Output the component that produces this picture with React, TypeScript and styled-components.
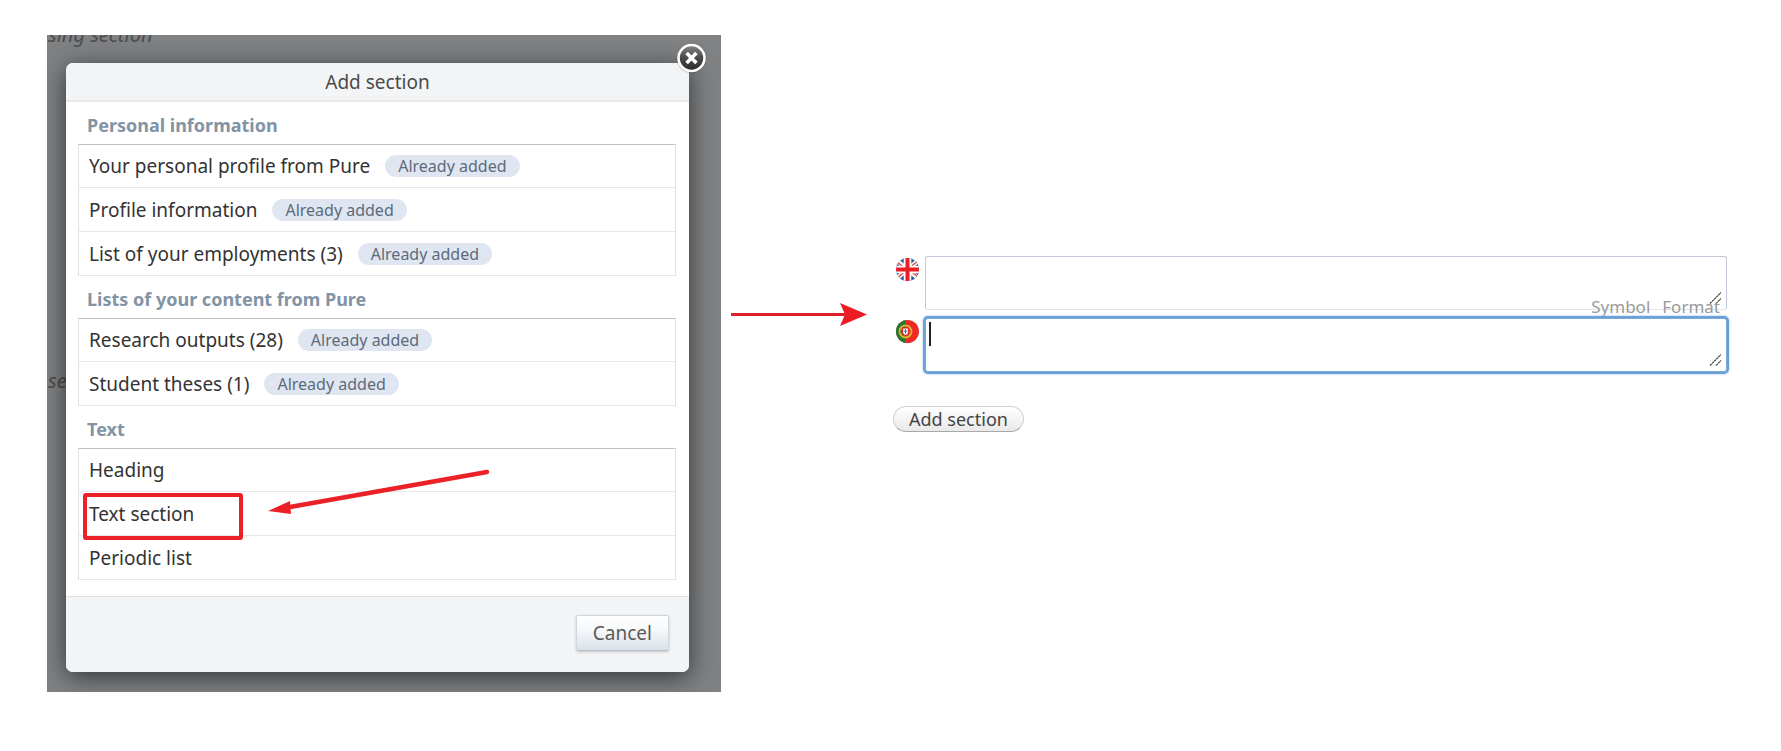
import React from 'react';
import styled, { createGlobalStyle, css } from 'styled-components';

const GlobalStyle = createGlobalStyle`
  *, *::before, *::after { box-sizing: border-box; }
  body {
    margin: 0;
    background: #fff;
    color: #333;
    font: 400 19px/24px "Noto Sans", "Open Sans", sans-serif;
  }
  button, textarea { font: inherit; color: inherit; }
`;

const Page = styled.main`
  display: grid;
  grid-template-columns: 674fr 172fr 834fr;
  align-items: start;
  padding: 35px 54px 58px 47px;
`;

const Backdrop = styled.section`
  position: relative;
  overflow: hidden;
  padding: 28px 32px 20px 19px;
  background: #7f8183;
`;

const BehindText = styled.span<{ $top: number; $left: number }>`
  position: absolute;
  top: ${(p) => p.$top}px;
  left: ${(p) => p.$left}px;
  color: #4c4d4f;
  font-size: 20px;
  font-style: italic;
  white-space: nowrap;
`;

const Dialog = styled.div`
  position: relative;
  border-radius: 7px;
  background: #fff;
  box-shadow: 0 5px 25px rgba(0, 0, 0, 0.6);
`;

const DialogHeader = styled.header`
  padding: 7px 16px 6px;
  border-bottom: 2px solid #e8e9ea;
  border-radius: 7px 7px 0 0;
  background: #f3f4f6;
  text-align: center;
`;

const DialogTitle = styled.h1`
  margin: 0;
  color: #4a4a4a;
  font-size: 19px;
  font-weight: 400;
  line-height: 24px;
`;

const CloseButton = styled.button`
  position: absolute;
  top: -20px;
  right: -18px;
  width: 31px;
  height: 31px;
  padding: 0;
  border: 0;
  background: none;
  svg { display: block; }
`;

const DialogBody = styled.div`
  padding: 0 13px 16px 12px;
`;

const GroupTitle = styled.h2`
  margin: 0;
  padding: 11px 9px 7px;
  color: #8293a5;
  font-size: 18px;
  font-weight: 700;
  line-height: 24px;
`;

const List = styled.ul`
  margin: 0;
  padding: 0;
  border: 1px solid #dfe1e3;
  border-top-color: #bfc1c3;
  border-bottom: 0;
  list-style: none;
`;

const Item = styled.li<{ $marked?: boolean }>`
  position: relative;
  height: 44px;
  border-bottom: 1px solid #e6e8ea;
  &:first-child { height: 43px; }
  ${(p) =>
    p.$marked &&
    css`
      &::after {
        content: "";
        position: absolute;
        top: 1px;
        left: 4px;
        width: 160px;
        height: 47px;
        border: 4px solid #ec2027;
        border-radius: 3px;
        pointer-events: none;
      }
    `}
`;

const ItemButton = styled.button`
  display: flex;
  align-items: center;
  gap: 15px;
  width: 100%;
  height: 100%;
  padding: 0 10px;
  border: 0;
  background: none;
  text-align: left;
`;

const Badge = styled.span`
  padding: 0 13px;
  border-radius: 11px;
  background: #dfe6f1;
  color: #5d6b79;
  font-size: 16px;
  line-height: 22px;
`;

const PointerArrow = styled.svg`
  position: absolute;
  top: -24px;
  left: 187px;
  z-index: 1;
  pointer-events: none;
`;

const DialogFooter = styled.footer`
  display: flex;
  justify-content: flex-end;
  padding: 18px 20px 21px;
  border-top: 1px solid #dfe1e3;
  border-radius: 0 0 7px 7px;
  background: #f3f4f6;
`;

const CancelButton = styled.button`
  height: 36px;
  padding: 0 16px;
  border: 1px solid #cfd6de;
  border-bottom-color: #b4c0cc;
  border-radius: 2px;
  background: linear-gradient(#fff, #f6f8fa 40%, #dbe1e9);
  box-shadow: 0 1px 3px rgba(0, 0, 0, 0.2);
  color: #5a5a5a;
  line-height: 24px;
`;

const FlowArrow = styled.svg`
  margin: 266px 0 0 10px;
`;

const Editor = styled.form`
  padding-top: 221px;
`;

const Field = styled.div`
  display: flex;
  align-items: flex-start;
  gap: 6px;
  margin-bottom: 8px;
`;

const FlagLabel = styled.label`
  display: block;
  margin-left: 3px;
  padding-top: 2px;
  svg { display: block; }
`;

const InputWrap = styled.div`
  position: relative;
  flex: 1;
`;

const TextInput = styled.textarea<{ $active?: boolean }>`
  display: block;
  width: 100%;
  height: 54px;
  padding: 3px 4px;
  border: 1px solid #c3c9d6;
  border-bottom-color: #e2e4ea;
  border-radius: 3px;
  outline: 0;
  background: #fff;
  resize: none;
  ${(p) =>
    p.$active &&
    css`
      border-color: #7ba9da;
      box-shadow: 0 0 0 2px #6b9fd6, 0 0 3px 2px #a5cbf0;
    `}
`;

const Grip = styled.svg`
  position: absolute;
  right: 4px;
  bottom: 6px;
  pointer-events: none;
`;

const Caret = styled.span`
  position: absolute;
  top: 4px;
  left: 4px;
  width: 2px;
  height: 24px;
  background: #222;
`;

const Tools = styled.div`
  position: absolute;
  right: 7px;
  bottom: -8px;
  display: flex;
  gap: 12px;
`;

const ToolButton = styled.button`
  padding: 0;
  border: 0;
  background: none;
  color: #9a9a9a;
  font-size: 17px;
  line-height: 22px;
`;

const AddButton = styled.button`
  display: block;
  height: 26px;
  margin-top: 34px;
  padding: 0 15px;
  border: 1px solid #d0d0d0;
  border-bottom-color: #a8a8a8;
  border-radius: 13px;
  background: linear-gradient(#fff, #e9e9e9);
  color: #444;
  font-size: 18px;
  line-height: 22px;
`;

const groups: { title: string; items: { label: string; added?: boolean; marked?: boolean }[] }[] = [
  {
    title: 'Personal information',
    items: [
      { label: 'Your personal profile from Pure', added: true },
      { label: 'Profile information', added: true },
      { label: 'List of your employments (3)', added: true },
    ],
  },
  {
    title: 'Lists of your content from Pure',
    items: [
      { label: 'Research outputs (28)', added: true },
      { label: 'Student theses (1)', added: true },
    ],
  },
  {
    title: 'Text',
    items: [{ label: 'Heading' }, { label: 'Text section', marked: true }, { label: 'Periodic list' }],
  },
];

const UkFlag = () => (
  <svg width="23" height="23" viewBox="0 0 23 23" role="img" aria-label="English">
    <clipPath id="uk"><circle cx="11.5" cy="11.5" r="11.5" /></clipPath>
    <g clipPath="url(#uk)">
      <rect width="23" height="23" fill="#2f569f" />
      <path d="M0 2 23 21M23 2 0 21" stroke="#fff" strokeWidth="4.4" />
      <path d="M0 3 11 12M12 11 23 2M23 20 12 11M11 12 0 21" stroke="#e8434b" strokeWidth="1.4" />
      <path d="M11.5 0V23M0 11.5H23" stroke="#fff" strokeWidth="7.6" />
      <path d="M11.5 0V23M0 11.5H23" stroke="#ec1c24" strokeWidth="4" />
    </g>
  </svg>
);

const PortugalFlag = () => (
  <svg width="23" height="23" viewBox="0 0 23 23" role="img" aria-label="Portuguese">
    <clipPath id="pt"><circle cx="11.5" cy="11.5" r="11.5" /></clipPath>
    <g clipPath="url(#pt)">
      <rect width="23" height="23" fill="#ee2a24" />
      <rect width="9.5" height="23" fill="#1f7a34" />
      <circle cx="9.5" cy="11.5" r="6" fill="none" stroke="#d8b52f" strokeWidth="1.8" />
      <path d="M5 8.5 14 14.5M5 14.5 14 8.5" stroke="#d8b52f" strokeWidth="1" />
      <path d="M6 7.5h7v5a3.5 3.5 0 0 1-7 0Z" fill="#e5252a" />
      <path d="M7.2 8.6h4.6v4a2.3 2.3 0 0 1-4.6 0Z" fill="#fff" />
      <path d="M9.5 9.2v4.4M8 11.2h3" stroke="#4569b0" strokeWidth="1" />
    </g>
  </svg>
);

const ResizeGrip = () => (
  <Grip width="14" height="12" viewBox="0 0 14 12" aria-hidden="true">
    <path d="M1 11.5 12 .5M7 11.5 12 6.5" stroke="#444" strokeWidth="1.2" strokeDasharray="2.4 .5" />
  </Grip>
);

export default function App() {
  return (
    <>
      <GlobalStyle />
      <Page>
        <Backdrop>
          <BehindText $top={-12} $left={1}>sing section</BehindText>
          <BehindText $top={334} $left={1}>se</BehindText>
          <Dialog role="dialog" aria-labelledby="dialog-title">
            <DialogHeader>
              <DialogTitle id="dialog-title">Add section</DialogTitle>
            </DialogHeader>
            <CloseButton type="button" aria-label="Close">
              <svg width="31" height="31" viewBox="0 0 31 31">
                <defs>
                  <linearGradient id="closeFill" x1="0" y1="0" x2="0" y2="1">
                    <stop offset="0" stopColor="#858585" />
                    <stop offset=".5" stopColor="#4a4a4a" />
                    <stop offset="1" stopColor="#2a2a2a" />
                  </linearGradient>
                </defs>
                <circle cx="15.5" cy="15.5" r="15" fill="#000" fillOpacity=".15" />
                <circle cx="15.5" cy="15" r="13" fill="url(#closeFill)" stroke="#fff" strokeWidth="2.6" />
                <path d="M10.6 10.1 20.4 19.9M20.4 10.1 10.6 19.9" stroke="#fff" strokeWidth="3.6" />
              </svg>
            </CloseButton>
            <DialogBody>
              {groups.map((group) => (
                <section key={group.title}>
                  <GroupTitle>{group.title}</GroupTitle>
                  <List>
                    {group.items.map((item) => (
                      <Item key={item.label} $marked={item.marked}>
                        <ItemButton type="button">
                          {item.label}
                          {item.added && <Badge>Already added</Badge>}
                        </ItemButton>
                        {item.marked && (
                          <PointerArrow width="226" height="50" viewBox="0 0 226 50" aria-hidden="true">
                            <path d="M221 4 24 39" stroke="#ec2027" strokeWidth="4.5" strokeLinecap="round" />
                            <path d="M2 43 24 33 25 46Z" fill="#ec2027" />
                          </PointerArrow>
                        )}
                      </Item>
                    ))}
                  </List>
                </section>
              ))}
            </DialogBody>
            <DialogFooter>
              <CancelButton type="button">Cancel</CancelButton>
            </DialogFooter>
          </Dialog>
        </Backdrop>
        <FlowArrow width="137" height="26" viewBox="0 0 137 26" aria-hidden="true">
          <path d="M0 13.5H116" stroke="#e01f2b" strokeWidth="3" />
          <path d="M109 2 136 13.5 109 25 114 13.5Z" fill="#ec1c24" />
        </FlowArrow>
        <Editor>
          <Field>
            <FlagLabel htmlFor="text-en"><UkFlag /></FlagLabel>
            <InputWrap>
              <TextInput id="text-en" />
              <ResizeGrip />
              <Tools>
                <ToolButton type="button">Symbol</ToolButton>
                <ToolButton type="button">Format</ToolButton>
              </Tools>
            </InputWrap>
          </Field>
          <Field>
            <FlagLabel htmlFor="text-pt"><PortugalFlag /></FlagLabel>
            <InputWrap>
              <TextInput id="text-pt" $active />
              <Caret />
              <ResizeGrip />
            </InputWrap>
          </Field>
          <AddButton type="button">Add section</AddButton>
        </Editor>
      </Page>
    </>
  );
}
